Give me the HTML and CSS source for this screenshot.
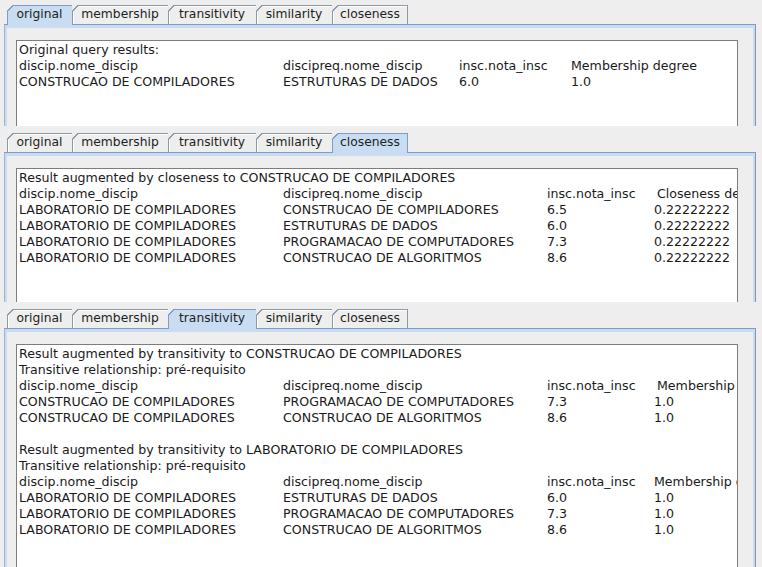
FILE: index.html
```html
<!DOCTYPE html>
<html>
<head>
<meta charset="utf-8">
<link rel="stylesheet" href="styles.css">
</head>
<body>
<div class="pane p1">
  <div class="tabs">
    <div class="tab t-orig sel">original</div>
    <div class="tab t-memb">membership</div>
    <div class="tab t-trans">transitivity</div>
    <div class="tab t-sim">similarity</div>
    <div class="tab t-close last">closeness</div>
  </div>
  <div class="content">
    <div class="text">
      <div class="line">Original query results:</div>
      <div class="row"><span class="c1">discip.nome_discip</span><span class="c2a">discipreq.nome_discip</span><span class="c3a">insc.nota_insc</span><span>Membership degree</span></div>
      <div class="row"><span class="c1">CONSTRUCAO DE COMPILADORES</span><span class="c2a">ESTRUTURAS DE DADOS</span><span class="c3a">6.0</span><span>1.0</span></div>
    </div>
  </div>
</div>

<div class="pane p2">
  <div class="tabs">
    <div class="tab t-orig">original</div>
    <div class="tab t-memb">membership</div>
    <div class="tab t-trans">transitivity</div>
    <div class="tab t-sim">similarity</div>
    <div class="tab t-close last sel">closeness</div>
  </div>
  <div class="content">
    <div class="text">
      <div class="line">Result augmented by closeness to CONSTRUCAO DE COMPILADORES</div>
      <div class="row"><span class="c1">discip.nome_discip</span><span class="c2">discipreq.nome_discip</span><span class="c3">insc.nota_insc</span><span class="hd4">Closeness degree</span></div>
      <div class="row"><span class="c1">LABORATORIO DE COMPILADORES</span><span class="c2">CONSTRUCAO DE COMPILADORES</span><span class="c3">6.5</span><span>0.22222222</span></div>
      <div class="row"><span class="c1">LABORATORIO DE COMPILADORES</span><span class="c2">ESTRUTURAS DE DADOS</span><span class="c3">6.0</span><span>0.22222222</span></div>
      <div class="row"><span class="c1">LABORATORIO DE COMPILADORES</span><span class="c2">PROGRAMACAO DE COMPUTADORES</span><span class="c3">7.3</span><span>0.22222222</span></div>
      <div class="row"><span class="c1">LABORATORIO DE COMPILADORES</span><span class="c2">CONSTRUCAO DE ALGORITMOS</span><span class="c3">8.6</span><span>0.22222222</span></div>
    </div>
  </div>
</div>

<div class="pane p3">
  <div class="tabs">
    <div class="tab t-orig">original</div>
    <div class="tab t-memb">membership</div>
    <div class="tab t-trans sel">transitivity</div>
    <div class="tab t-sim">similarity</div>
    <div class="tab t-close last">closeness</div>
  </div>
  <div class="content">
    <div class="text">
      <div class="line">Result augmented by transitivity to CONSTRUCAO DE COMPILADORES</div>
      <div class="line">Transitive relationship: pré-requisito</div>
      <div class="row"><span class="c1">discip.nome_discip</span><span class="c2">discipreq.nome_discip</span><span class="c3">insc.nota_insc</span><span class="hd4">Membership degree</span></div>
      <div class="row"><span class="c1">CONSTRUCAO DE COMPILADORES</span><span class="c2">PROGRAMACAO DE COMPUTADORES</span><span class="c3">7.3</span><span>1.0</span></div>
      <div class="row"><span class="c1">CONSTRUCAO DE COMPILADORES</span><span class="c2">CONSTRUCAO DE ALGORITMOS</span><span class="c3">8.6</span><span>1.0</span></div>
      <div class="line blank"></div>
      <div class="line">Result augmented by transitivity to LABORATORIO DE COMPILADORES</div>
      <div class="line">Transitive relationship: pré-requisito</div>
      <div class="row"><span class="c1">discip.nome_discip</span><span class="c2">discipreq.nome_discip</span><span class="c3">insc.nota_insc</span><span>Membership degree</span></div>
      <div class="row"><span class="c1">LABORATORIO DE COMPILADORES</span><span class="c2">ESTRUTURAS DE DADOS</span><span class="c3">6.0</span><span>1.0</span></div>
      <div class="row"><span class="c1">LABORATORIO DE COMPILADORES</span><span class="c2">PROGRAMACAO DE COMPUTADORES</span><span class="c3">7.3</span><span>1.0</span></div>
      <div class="row"><span class="c1">LABORATORIO DE COMPILADORES</span><span class="c2">CONSTRUCAO DE ALGORITMOS</span><span class="c3">8.6</span><span>1.0</span></div>
    </div>
  </div>
</div>
</body>
</html>
```

FILE: styles.css
```css
html, body {
  margin: 0;
  padding: 0;
}
body {
  width: 762px;
  height: 567px;
  overflow: hidden;
  background: #eeeeee;
  font-family: "DejaVu Sans", "Liberation Sans", sans-serif;
  font-size: 12px;
  color: #1a1a1a;
}

.pane {
  display: flex;
  flex-direction: column;
  overflow: hidden;
  box-sizing: border-box;
}
.p1 { height: 126px; padding-top: 5px; }
.p2 { height: 176px; padding-top: 7px; }
.p3 { height: 265px; padding-top: 7px; }

.tabs {
  display: flex;
  align-items: flex-start;
  height: 19px;
  padding-left: 7px;
  position: relative;
  z-index: 1;
  flex: none;
}

.tab {
  --bd: #8d99a6;
  --fill: #eeeeee;
  --hl: #ffffff;
  flex: none;
  box-sizing: border-box;
  height: 19px;
  line-height: 19px;
  text-align: center;
  color: #1e1e1e;
  font-size: 12.3px;
  background:
    linear-gradient(var(--bd), var(--bd)) 6px 0 / 100% 1px no-repeat,
    linear-gradient(var(--bd), var(--bd)) 0 6px / 1px 100% no-repeat,
    linear-gradient(to bottom right, transparent calc(50% - 0.8px), var(--bd) calc(50% - 0.8px), var(--bd) calc(50% + 0.6px), var(--fill) calc(50% + 0.6px)) 0 0 / 7px 7px no-repeat,
    linear-gradient(var(--hl), var(--hl)) 7px 1px / 100% 1px no-repeat,
    linear-gradient(var(--hl), var(--hl)) 1px 7px / 1px 100% no-repeat,
    linear-gradient(var(--fill), var(--fill)) 7px 0 / 100% 100% no-repeat,
    linear-gradient(var(--fill), var(--fill)) 0 7px / 100% 100% no-repeat;
}
.tab.last { box-shadow: inset -1px 0 0 var(--bd); }
.tab.sel {
  --fill: #c8ddf2;
  --hl: #c8ddf2;
  --bd: #7f9cc6;
  height: 20px;
  line-height: 19px;
}

.t-orig { width: 65px; }
.t-memb { width: 96px; }
.t-trans { width: 88px; }
.t-sim { width: 76px; }
.t-close { width: 76px; }

.content {
  flex: 1;
  display: flex;
  flex-direction: column;
  margin-left: 4px;
  width: 752px;
  box-sizing: border-box;
  border-top: 1px solid #7f9cc6;
  border-left: 1px solid #9fb3cd;
  border-right: 1px solid #8593a3;
  background: #eeeeee;
  box-shadow: inset 0 3px 0 #c8ddf2, inset 2px 0 0 #c8ddf2, inset -2px 0 0 #c8ddf2;
  padding: 15px 17px 0 11px;
}

.text {
  flex: 1;
  background: #ffffff;
  border: 1px solid #7d7d7d;
  border-bottom: 0;
  padding: 1px 0 0 2px;
  overflow: hidden;
  white-space: nowrap;
  font-size: 12.6px;
}

.line, .row {
  height: 16px;
  line-height: 16px;
}
.row {
  display: flex;
}
.row span {
  flex: none;
}
.c1 { width: 264px; }
.c2 { width: 264px; }
.c2a { width: 176px; }
.c3 { width: 107px; }
.c3a { width: 112px; }
.hd4 { padding-left: 3px; }
```
